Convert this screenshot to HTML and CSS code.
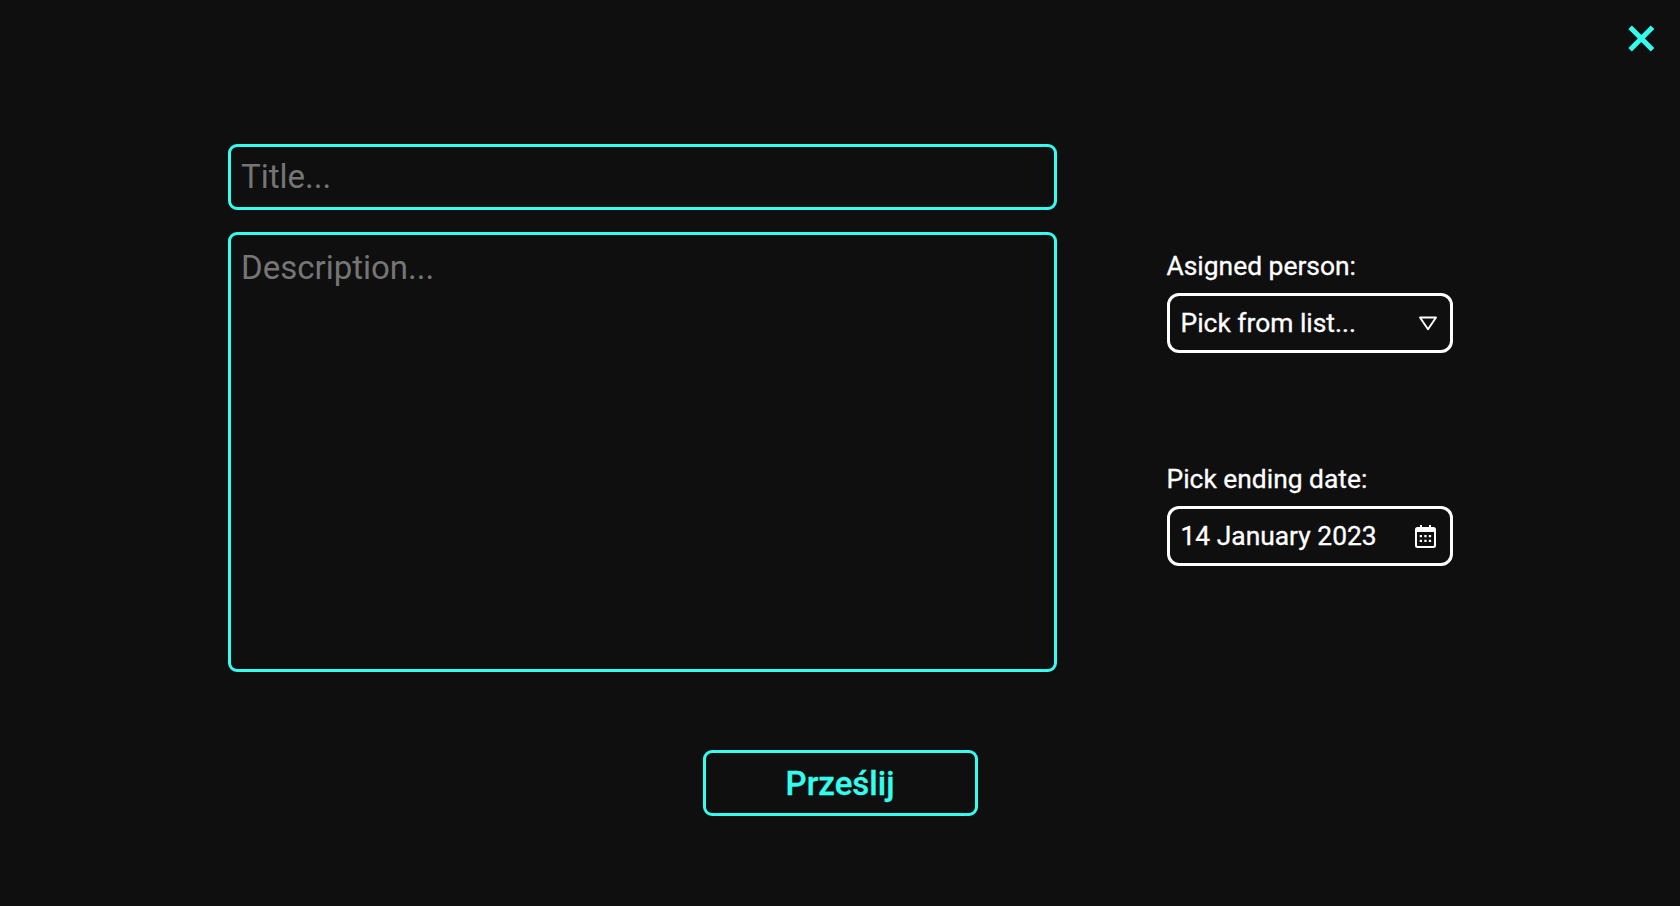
FILE: index.html
```html
<!DOCTYPE html>
<html lang="en">
<head>
<meta charset="utf-8">
<title>New task</title>
<link rel="stylesheet" href="styles.css">
</head>
<body>
<form class="task-form">
  <header class="topbar">
    <button class="close" type="button" aria-label="Close">
      <svg width="27" height="27" viewBox="0 0 27 27"><path d="M2.1 2.3 24.5 24.7M24.5 2.3 2.1 24.7" fill="none" stroke="currentColor" stroke-width="5"/></svg>
    </button>
  </header>
  <main class="content">
    <section class="main-fields">
      <input class="field title" type="text" placeholder="Title...">
      <textarea class="field description" placeholder="Description..."></textarea>
    </section>
    <aside class="options">
      <div class="option">
        <span class="label">Asigned person:</span>
        <div class="picker">
          <span>Pick from list...</span>
          <svg class="arrow" width="20" height="16" viewBox="0 0 20 16"><path d="M2 2.5H18L10 14.3Z" fill="none" stroke="currentColor" stroke-width="1.9" stroke-linejoin="round"/></svg>
        </div>
      </div>
      <div class="option">
        <span class="label">Pick ending date:</span>
        <div class="picker">
          <span>14 January 2023</span>
          <svg class="calendar" width="21" height="23" viewBox="0 0 21 23" fill="currentColor"><path fill-rule="evenodd" d="M5 0H7V2H14V0H16V2H18.5Q21 2 21 4.5V20.5Q21 23 18.5 23H2.5Q0 23 0 20.5V4.5Q0 2 2.5 2H5ZM2 7V20.2Q2 21 2.8 21H18.2Q19 21 19 20.2V7Z"/><path d="M4.7 10h2.3v2.3H4.7zM9.3 10h2.3v2.3H9.3zM13.8 10h2.3v2.3h-2.3zM4.7 14.7h2.3V17H4.7zM9.3 14.7h2.3V17H9.3zM13.8 14.7h2.3V17h-2.3z"/></svg>
        </div>
      </div>
    </aside>
  </main>
  <footer class="actions">
    <button class="submit" type="button">Prześlij</button>
  </footer>
</form>
</body>
</html>
```
FILE: styles.css
```css
* {
  box-sizing: border-box;
}

body {
  margin: 0;
  background: #0f0f0f;
  color: #fff;
  font-family: Roboto, sans-serif;
}

.task-form {
  display: flex;
  flex-direction: column;
  height: 906px;
}

.topbar {
  display: flex;
  justify-content: flex-end;
  height: 144px;
  padding: 25px 25px 0 0;
}

.close {
  width: 27px;
  height: 27px;
  padding: 0;
  border: 0;
  background: none;
  color: #33ffee;
}

.close svg {
  display: block;
}

.content {
  display: flex;
  gap: 110px;
  padding-left: 228px;
}

.main-fields {
  display: flex;
  flex-direction: column;
  gap: 22px;
  width: 829px;
}

.field {
  display: block;
  width: 100%;
  margin: 0;
  border: 3px solid #33ffee;
  border-radius: 9px;
  outline: none;
  background: transparent;
  color: #fff;
  font: 400 33px Roboto, sans-serif;
  resize: none;
}

.field::placeholder {
  color: #757575;
}

.title {
  height: 66px;
  padding: 0 10px 2px;
}

.description {
  height: 440px;
  padding: 13px 10px;
}

.options {
  display: flex;
  flex-direction: column;
  gap: 110px;
  width: 286px;
  padding-top: 106px;
}

.option {
  display: flex;
  flex-direction: column;
  gap: 11px;
}

.label,
.picker {
  font-size: 26.4px;
  line-height: 32px;
  -webkit-text-stroke: 0.3px currentColor;
}

.label {
  height: 32px;
  margin-left: -0.5px;
}

.picker {
  display: flex;
  align-items: center;
  justify-content: space-between;
  height: 60px;
  padding: 0 14px 0 10.5px;
  border: 3px solid #fff;
  border-radius: 12px;
}

.arrow {
  margin-right: -2px;
}

.actions {
  display: flex;
  justify-content: center;
  padding-top: 78px;
}

.submit {
  width: 275px;
  height: 66px;
  padding: 0;
  border: 3px solid #33ffee;
  border-radius: 9px;
  background: transparent;
  color: #33ffee;
  font: 500 33px Roboto, sans-serif;
  -webkit-text-stroke: 0.3px currentColor;
}
```
